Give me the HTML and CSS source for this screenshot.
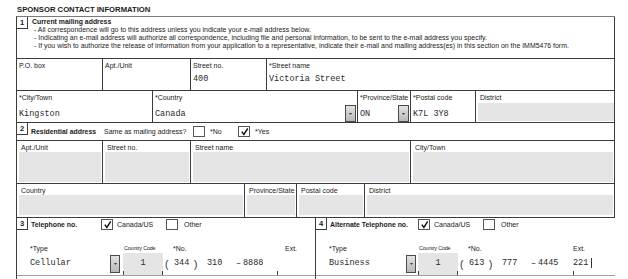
FILE: index.html
```html
<html>
<head>
  <meta charset="utf-8">
  <link rel="stylesheet" href="styles.css">
</head>
<body>
  <h1 class="title">SPONSOR CONTACT INFORMATION</h1>
  <div class="form">

    <div class="sec-mail">
      <span class="num">1</span>
      <div class="intro">
        <b>Current mailing address</b>
        <p>- All correspondence will go to this address unless you indicate your e-mail address below.</p>
        <p>- Indicating an e-mail address will authorize all correspondence, including file and personal information, to be sent to the e-mail address you specify.</p>
        <p>- If you wish to authorize the release of information from your application to a representative, indicate their e-mail and mailing address(es) in this section on the IMM5476 form.</p>
      </div>
    </div>

    <div class="row row-mail1">
      <div class="cell"><span class="lbl">P.O. box</span><div class="val-row"></div></div>
      <div class="cell"><span class="lbl">Apt./Unit</span><div class="val-row"></div></div>
      <div class="cell"><span class="lbl">Street no.</span><div class="val-row">400</div></div>
      <div class="cell"><span class="lbl">*Street name</span><div class="val-row">Victoria Street</div></div>
    </div>

    <div class="row row-mail2">
      <div class="cell"><span class="lbl">*City/Town</span><div class="val-row">Kingston</div></div>
      <div class="cell cell-dd">
        <span class="lbl">*Country</span>
        <div class="val-row"><span>Canada</span><span class="dd"><svg viewBox="0 0 6 4"><path d="M1 1h4l-2 2z"/></svg></span></div>
      </div>
      <div class="cell cell-dd">
        <span class="lbl">*Province/State</span>
        <div class="val-row"><span>ON</span><span class="dd"><svg viewBox="0 0 6 4"><path d="M1 1h4l-2 2z"/></svg></span></div>
      </div>
      <div class="cell"><span class="lbl">*Postal code</span><div class="val-row">K7L 3Y8</div></div>
      <div class="cell cell-grey"><span class="lbl">District</span><div class="grey grey-top"></div></div>
    </div>

    <div class="sec-res">
      <span class="num">2</span>
      <b class="sec-title">Residential address</b>
      <span class="question">Same as mailing address?</span>
      <span class="opt opt-no"><span class="box"></span>*No</span>
      <span class="opt"><span class="box"><svg viewBox="0 0 10 10"><path d="M2 5.2 L4.3 8.3 L8.6 1.6"/></svg></span>*Yes</span>
    </div>

    <div class="row row-res1">
      <div class="cell cell-grey"><span class="lbl">Apt./Unit</span><div class="grey"></div></div>
      <div class="cell cell-grey"><span class="lbl">Street no.</span><div class="grey"></div></div>
      <div class="cell cell-grey"><span class="lbl">Street name</span><div class="grey"></div></div>
      <div class="cell cell-grey"><span class="lbl">City/Town</span><div class="grey"></div></div>
    </div>

    <div class="row row-res2">
      <div class="cell cell-grey"><span class="lbl">Country</span><div class="grey"></div></div>
      <div class="cell cell-grey"><span class="lbl">Province/State</span><div class="grey"></div></div>
      <div class="cell cell-grey"><span class="lbl">Postal code</span><div class="grey"></div></div>
      <div class="cell cell-grey"><span class="lbl">District</span><div class="grey"></div></div>
    </div>

    <div class="phones">
      <div class="phone phone-main">
        <div class="phone-head">
          <span class="num">3</span>
          <b class="ph-title">Telephone no.</b>
          <span class="opt opt-first"><span class="box"><svg viewBox="0 0 10 10"><path d="M2 5.2 L4.3 8.3 L8.6 1.6"/></svg></span>Canada/US</span>
          <span class="opt opt-other"><span class="box"></span>Other</span>
        </div>
        <div class="ph-fields">
          <div class="fld"><span class="f-lbl">*Type</span><div class="f-val">Cellular</div></div>
          <div class="fld"><span class="f-lbl"></span><div class="f-val"><span class="dd dd-tall"><svg viewBox="0 0 6 4"><path d="M1 1h4l-2 2z"/></svg></span></div></div>
          <div class="fld"><span class="f-lbl f-cc">Country Code</span><div class="f-val cc">1</div></div>
          <div class="fld"><span class="f-lbl f-no">*No.</span>
            <div class="f-val number"><span class="par">(</span><span class="area">344</span><span class="par par-r">)</span><span class="exch">310</span><span class="dash">–</span><span>8888</span></div>
          </div>
          <div class="fld"><span class="f-lbl f-ext">Ext.</span><div class="f-val ext"></div></div>
        </div>
      </div>

      <div class="phone phone-alt">
        <div class="phone-head">
          <span class="num">4</span>
          <b class="ph-title">Alternate Telephone no.</b>
          <span class="opt opt-first"><span class="box"><svg viewBox="0 0 10 10"><path d="M2 5.2 L4.3 8.3 L8.6 1.6"/></svg></span>Canada/US</span>
          <span class="opt opt-other"><span class="box"></span>Other</span>
        </div>
        <div class="ph-fields">
          <div class="fld"><span class="f-lbl">*Type</span><div class="f-val">Business</div></div>
          <div class="fld"><span class="f-lbl"></span><div class="f-val"><span class="dd dd-tall"><svg viewBox="0 0 6 4"><path d="M1 1h4l-2 2z"/></svg></span></div></div>
          <div class="fld"><span class="f-lbl f-cc">Country Code</span><div class="f-val cc">1</div></div>
          <div class="fld"><span class="f-lbl f-no">*No.</span>
            <div class="f-val number"><span class="par">(</span><span class="area">613</span><span class="par par-r">)</span><span class="exch">777</span><span class="dash">–</span><span>4445</span></div>
          </div>
          <div class="fld"><span class="f-lbl f-ext">Ext.</span><div class="f-val ext">221<span class="caret"></span></div></div>
        </div>
      </div>
    </div>

  </div>
</body>
</html>
```

FILE: styles.css
```css
* {
  box-sizing: border-box;
}
body {
  margin: 0;
  background: #ffffff;
  color: #1a1a1a;
  font-family: "Liberation Sans", Arial, sans-serif;
  font-size: 7px;
}
b {
  font-weight: bold;
}

.title {
  margin: 0;
  height: 16px;
  padding: 3px 0 0 17px;
  font-size: 7.7px;
  line-height: 13px;
  font-weight: bold;
}

.form {
  margin-left: 16px;
  width: 599px;
  border-left: 1px solid #3c3c3c;
  border-top: 1px solid #7a7a7a;
}

/* numbered corner boxes */
.num {
  flex: none;
  align-self: flex-start;
  width: 11px;
  height: 12px;
  border-right: 1px solid #3c3c3c;
  border-bottom: 1px solid #3c3c3c;
  font-weight: bold;
  font-size: 7.5px;
  line-height: 11px;
  text-align: center;
}

.sec-mail {
  display: flex;
  height: 41px;
  border-right: 1px solid #3c3c3c;
}
.intro {
  padding-left: 4px;
}
.intro b {
  display: block;
  font-size: 6.9px;
  line-height: 9px;
}
.intro p {
  margin: 0;
  padding-left: 2px;
  font-size: 6.95px;
  line-height: 8px;
  white-space: nowrap;
}

/* grid rows */
.row {
  display: grid;
  border-top: 1px solid #3c3c3c;
  border-right: 1px solid #3c3c3c;
}
.row-mail1 {
  grid-template-columns: 85px 88px 76px 1fr;
  height: 32px;
}
.row-mail2 {
  grid-template-columns: 135px 205px 53px 65px 1fr;
  height: 32px;
}
.row-res1 {
  grid-template-columns: 85px 88px 220px 1fr;
  height: 43px;
}
.row-res2 {
  grid-template-columns: 227px 52px 68px 1fr;
  height: 34px;
}

.cell {
  display: flex;
  flex-direction: column;
  min-width: 0;
  padding: 2px 2px 0;
}
.cell + .cell {
  border-left: 1px solid #3c3c3c;
}
.lbl {
  line-height: 9px;
  white-space: nowrap;
}
.val-row {
  margin-top: auto;
  height: 17px;
  display: flex;
  align-items: center;
  justify-content: space-between;
  font-family: "Liberation Mono", "Courier New", monospace;
  font-size: 8.5px;
  color: #2a2a2a;
  white-space: pre;
}
.row-mail1 .val-row {
  margin-bottom: 3px;
}
.cell-dd {
  padding-right: 1px;
}

.cell-grey {
  padding: 2px 1px 1px 2px;
}
.cell-grey .lbl {
  padding-left: 2px;
}
.row-res2 .cell-grey {
  padding-bottom: 2px;
}
.grey {
  flex: 1;
  background: #e5e5e5;
}
.grey-top {
  margin-top: 1px;
  margin-right: -1px;
}

/* dropdown button */
.dd {
  flex: none;
  width: 11px;
  height: 17px;
  border: 1px solid #4a4a4a;
  background: linear-gradient(#e2e2e2, #b9b9b9);
  display: flex;
  align-items: center;
  justify-content: center;
}
.dd svg {
  width: 5px;
  height: 4px;
  fill: #111;
}
.dd-tall {
  width: 10px;
  height: 18px;
}

/* checkboxes */
.opt {
  display: flex;
  align-items: center;
  gap: 5px;
  white-space: nowrap;
}
.box {
  flex: none;
  width: 12px;
  height: 11px;
  border: 1px solid #555;
  background: #fff;
  display: flex;
  align-items: center;
  justify-content: center;
}
.box svg {
  width: 9px;
  height: 9px;
  fill: none;
  stroke: #111;
  stroke-width: 1.6;
}

.sec-res {
  display: flex;
  align-items: center;
  height: 18px;
  border-top: 1px solid #3c3c3c;
  border-right: 1px solid #3c3c3c;
}
.sec-title {
  width: 73px;
  margin-left: 3px;
  font-size: 6.9px;
}
.question {
  width: 89px;
}
.opt-no {
  width: 45px;
}

/* telephone sections */
.phones {
  display: grid;
  grid-template-columns: 298px 1fr;
  border-top: 1px solid #3c3c3c;
  height: 62px;
}
.phone + .phone {
  border-left: 1px solid #3c3c3c;
}
.phone-head {
  display: flex;
  align-items: center;
  height: 12px;
}
.ph-title {
  width: 70px;
  margin-left: 3px;
  font-size: 6.9px;
  white-space: nowrap;
}
.phone-alt .ph-title {
  width: 88px;
}
.opt-first {
  width: 65px;
  gap: 4px;
}
.opt-other {
  gap: 6px;
}

.ph-fields {
  display: grid;
  margin-top: 14px;
  padding-left: 13px;
  border-bottom: 1px solid #a0a0a0;
}
.phone-main .ph-fields {
  grid-template-columns: 80px 13px 40px 114px 1fr;
}
.phone-alt .ph-fields {
  grid-template-columns: 77px 12px 40px 115px 1fr;
}
.fld {
  display: flex;
  flex-direction: column;
}
.f-lbl {
  height: 9px;
  line-height: 9px;
  white-space: nowrap;
}
.f-cc {
  padding-left: 1px;
  font-size: 5.4px;
  letter-spacing: -0.15px;
}
.f-no {
  padding-left: 10px;
}
.phone-main .f-ext {
  padding-left: 8px;
}
.f-val {
  height: 22px;
  padding-bottom: 3px;
  display: flex;
  align-items: center;
  font-family: "Liberation Mono", "Courier New", monospace;
  font-size: 8.5px;
  color: #2a2a2a;
  white-space: pre;
}
.f-val .dd {
  margin-top: 3px;
}
.cc {
  justify-content: center;
  background:
    linear-gradient(#444, #444) left bottom / 1px 4px no-repeat,
    linear-gradient(#444, #444) right bottom / 1px 4px no-repeat,
    #e5e5e5;
}
.ext {
  background: linear-gradient(#444, #444) left bottom / 1px 4px no-repeat;
}
.number span {
  flex: none;
}
.par {
  width: 11px;
  padding-left: 2px;
  font-family: "Liberation Sans", Arial, sans-serif;
  font-size: 10px;
  position: relative;
  top: 2px;
}
.area {
  width: 20px;
}
.par-r {
  width: 13px;
  padding-left: 0;
}
.exch {
  width: 29px;
}
.dash {
  width: 7px;
  position: relative;
  top: 1px;
}
.caret {
  width: 1px;
  height: 10px;
  margin-left: 3px;
  background: #333;
}
```
